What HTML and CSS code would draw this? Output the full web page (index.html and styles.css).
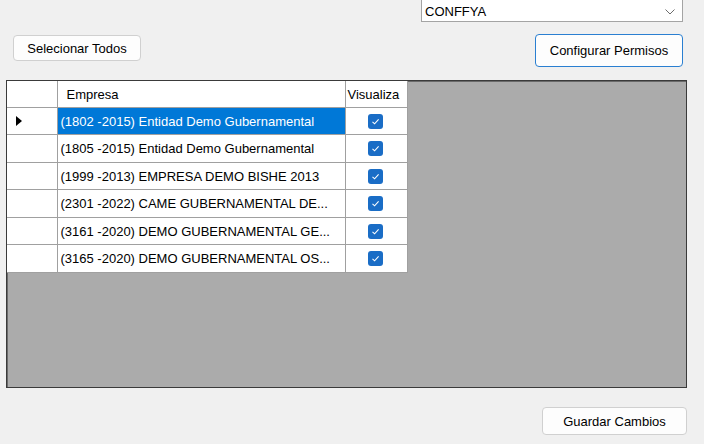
FILE: index.html
```html
<!DOCTYPE html>
<html lang="es">
<head>
<meta charset="utf-8">
<title>Permisos por Empresa</title>
<link rel="stylesheet" href="styles.css">
</head>
<body>
<div class="form">
  <div class="top-row">
    <div class="combo">
      <span class="combo-text">CONFFYA</span>
      <svg class="chevron" width="10" height="6" viewBox="0 0 10 6"><polyline points="0.5,0.5 5,5 9.5,0.5" fill="none" stroke="#6d6d6d" stroke-width="1"/></svg>
    </div>
  </div>
  <div class="actions-row">
    <button class="btn btn-select">Selecionar Todos</button>
    <button class="btn btn-config">Configurar Permisos</button>
  </div>
  <div class="grid">
    <table class="data">
      <colgroup>
        <col class="c-head"><col class="c-empresa"><col class="c-vis">
      </colgroup>
      <thead>
        <tr class="hdr">
          <th class="rowhead"></th>
          <th class="th-empresa">Empresa</th>
          <th class="th-vis">Visualiza</th>
        </tr>
      </thead>
      <tbody>
        <tr>
          <td class="rowhead"><span class="current"></span></td>
          <td class="name selected">(1802 -2015) Entidad Demo Gubernamental</td>
          <td class="chk"><svg width="15" height="15" viewBox="0 0 15 15"><rect x="0" y="0" width="15" height="15" rx="3" fill="#1a6dc6"/><polyline points="4.5,7.8 6.6,9.8 10.6,5.4" fill="none" stroke="#fff" stroke-width="1.1"/></svg></td>
        </tr>
        <tr>
          <td class="rowhead"></td>
          <td class="name">(1805 -2015) Entidad Demo Gubernamental</td>
          <td class="chk"><svg width="15" height="15" viewBox="0 0 15 15"><rect x="0" y="0" width="15" height="15" rx="3" fill="#1a6dc6"/><polyline points="4.5,7.8 6.6,9.8 10.6,5.4" fill="none" stroke="#fff" stroke-width="1.1"/></svg></td>
        </tr>
        <tr>
          <td class="rowhead"></td>
          <td class="name">(1999 -2013) EMPRESA DEMO BISHE 2013</td>
          <td class="chk"><svg width="15" height="15" viewBox="0 0 15 15"><rect x="0" y="0" width="15" height="15" rx="3" fill="#1a6dc6"/><polyline points="4.5,7.8 6.6,9.8 10.6,5.4" fill="none" stroke="#fff" stroke-width="1.1"/></svg></td>
        </tr>
        <tr>
          <td class="rowhead"></td>
          <td class="name">(2301 -2022) CAME GUBERNAMENTAL DE...</td>
          <td class="chk"><svg width="15" height="15" viewBox="0 0 15 15"><rect x="0" y="0" width="15" height="15" rx="3" fill="#1a6dc6"/><polyline points="4.5,7.8 6.6,9.8 10.6,5.4" fill="none" stroke="#fff" stroke-width="1.1"/></svg></td>
        </tr>
        <tr>
          <td class="rowhead"></td>
          <td class="name">(3161 -2020) DEMO GUBERNAMENTAL GE...</td>
          <td class="chk"><svg width="15" height="15" viewBox="0 0 15 15"><rect x="0" y="0" width="15" height="15" rx="3" fill="#1a6dc6"/><polyline points="4.5,7.8 6.6,9.8 10.6,5.4" fill="none" stroke="#fff" stroke-width="1.1"/></svg></td>
        </tr>
        <tr>
          <td class="rowhead"></td>
          <td class="name">(3165 -2020) DEMO GUBERNAMENTAL OS...</td>
          <td class="chk"><svg width="15" height="15" viewBox="0 0 15 15"><rect x="0" y="0" width="15" height="15" rx="3" fill="#1a6dc6"/><polyline points="4.5,7.8 6.6,9.8 10.6,5.4" fill="none" stroke="#fff" stroke-width="1.1"/></svg></td>
        </tr>
      </tbody>
    </table>
  </div>
  <div class="footer-row">
    <button class="btn btn-save">Guardar Cambios</button>
  </div>
</div>
</body>
</html>
```

FILE: styles.css
```css
html, body {
  margin: 0;
  padding: 0;
  background: #f0f0f0;
}

body {
  width: 704px;
  height: 444px;
  overflow: hidden;
  font-family: "Liberation Sans", Arial, sans-serif;
  font-size: 13px;
  color: #000;
}

.form {
  display: flex;
  flex-direction: column;
}

/* company selector */
.top-row {
  display: flex;
  justify-content: flex-end;
  padding-right: 21px;
  height: 22px;
}

.combo {
  box-sizing: border-box;
  width: 262px;
  height: 24px;
  margin-top: -2px;
  background: #fff;
  border: 1px solid #a4a4a4;
  display: flex;
  align-items: center;
  justify-content: space-between;
  padding: 0 7px 0 3px;
}

.combo-text {
  padding-top: 3px;
}

.chevron {
  margin-top: 3px;
}

/* buttons */
.btn {
  box-sizing: border-box;
  font-family: inherit;
  font-size: 13px;
  color: #000;
  background: #fdfdfd;
  border: 1px solid #d0d0d0;
  border-radius: 4px;
  padding: 0;
  margin: 0;
}

.actions-row {
  display: flex;
  justify-content: space-between;
  align-items: flex-start;
  margin-top: 12px;
  padding: 0 21px 0 13px;
  height: 33px;
}

.btn-select {
  width: 128px;
  height: 26px;
  margin-top: 1px;
}

.btn-config {
  width: 148px;
  height: 33px;
  border: 1px solid #2a7fd1;
}

/* data grid */
.grid {
  box-sizing: border-box;
  margin: 13px 0 0 6px;
  width: 681px;
  height: 308px;
  background: #ababab;
  border: 1px solid #3a3a3a;
  box-shadow: inset 1px 1px 0 #6a6a6a;
}

.data {
  border-collapse: collapse;
  table-layout: fixed;
  background: #fff;
}

.c-head { width: 50px; }
.c-empresa { width: 288px; }
.c-vis { width: 62px; }

.data th,
.data td {
  box-sizing: border-box;
  padding: 0;
  border-right: 1px solid #a0a0a0;
  border-bottom: 1px solid #a0a0a0;
  white-space: nowrap;
  overflow: hidden;
  font-weight: normal;
  text-align: left;
}

.hdr th {
  height: 26px;
}

.th-empresa {
  padding-left: 9px !important;
  padding-top: 2px !important;
}

.th-vis {
  padding-left: 2px !important;
  padding-top: 2px !important;
}

.data tbody td {
  height: 27.5px;
}

.name {
  padding-left: 3px !important;
  padding-top: 1px !important;
}

.selected {
  background: #0078d7;
  color: #fff;
}

.chk {
  text-align: center !important;
}

.chk svg {
  display: block;
  margin: 1px auto 0 22px;
}

.rowhead {
  position: relative;
}

.current {
  display: block;
  width: 0;
  height: 0;
  margin-left: 9px;
  border-top: 5px solid transparent;
  border-bottom: 5px solid transparent;
  border-left: 6px solid #000;
}

/* footer */
.footer-row {
  display: flex;
  justify-content: flex-end;
  padding-right: 17px;
  margin-top: 19px;
}

.btn-save {
  width: 145px;
  height: 28px;
}
```
